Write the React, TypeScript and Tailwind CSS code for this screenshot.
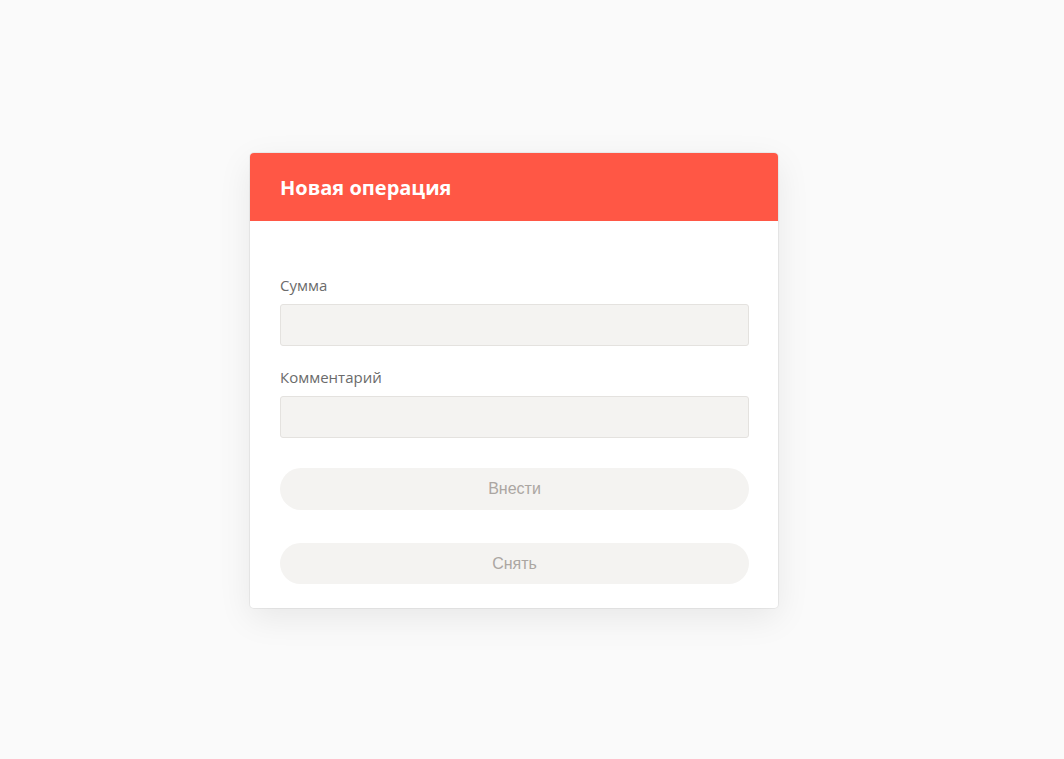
const inputCls =
  "block w-full h-[42px] rounded-[3px] border border-[#e4e2df] bg-[#f4f3f1] px-3 outline-none";
const btnCls =
  "block w-full rounded-full bg-[#f4f3f1] text-[16px] text-[#aba6a2] font-['Liberation_Sans',Arial,sans-serif]";

const App = () => (
  <div className="min-h-screen w-full bg-[#fafafa] pt-[153px] font-['Open_Sans','Noto_Sans',sans-serif]">
    <div className="mx-auto w-[528px] translate-x-[-18px] overflow-hidden rounded-[4px] bg-white shadow-[0_0_0_1px_rgba(0,0,0,0.05),0_10px_34px_rgba(0,0,0,0.08)]">
      <div className="flex h-[68px] items-center bg-[#ff5745] px-[30px] pt-[2px]">
        <h1 className="text-[20px] font-bold text-white">Новая операция</h1>
      </div>
      <div className="pl-[30px] pr-[29px] pt-[53px] pb-[24px]">
        <label className="mb-[8px] block text-[15px] leading-[22px] text-[#6b6b6b]">Сумма</label>
        <input className={inputCls} />
        <label className="mt-[20px] mb-[8px] block text-[15px] leading-[22px] text-[#6b6b6b]">Комментарий</label>
        <input className={inputCls} />
        <button className={`${btnCls} mt-[30px] h-[42px]`}>Внести</button>
        <button className={`${btnCls} mt-[33px] h-[41px]`}>Снять</button>
      </div>
    </div>
  </div>
);

export default App;
